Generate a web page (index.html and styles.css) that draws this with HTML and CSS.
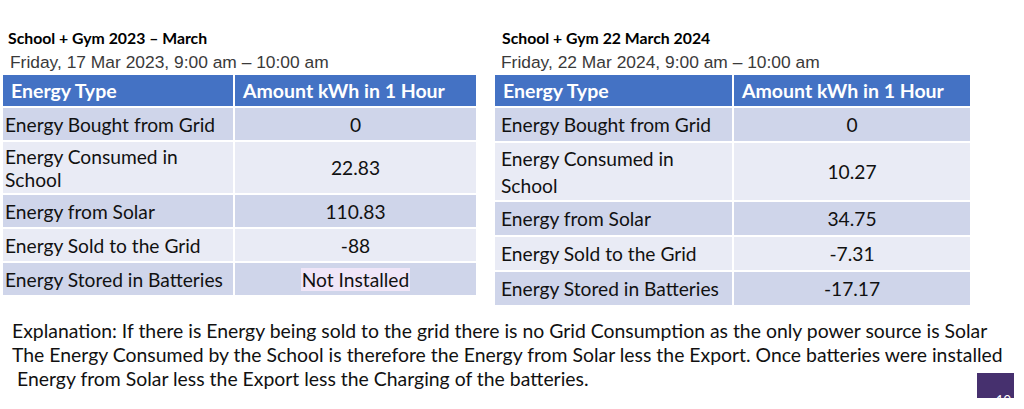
FILE: index.html
```html
<!DOCTYPE html>
<html lang="en">
<head>
<meta charset="utf-8">
<title>School + Gym energy comparison</title>
<link rel="stylesheet" href="styles.css">
</head>
<body>
<div class="page">
  <div class="tables">
    <section class="block block-left">
      <h2 class="title">School + Gym 2023 – March</h2>
      <p class="date">Friday, 17 Mar 2023, 9:00 am – 10:00 am</p>
      <table class="energy energy-left">
        <colgroup><col class="c1"><col class="c2"></colgroup>
        <thead>
          <tr class="head"><th>Energy Type</th><th>Amount kWh in 1 Hour</th></tr>
        </thead>
        <tbody>
          <tr class="dark"><td>Energy Bought from Grid</td><td class="num">0</td></tr>
          <tr class="light tall"><td>Energy Consumed in<br>School</td><td class="num">22.83</td></tr>
          <tr class="dark"><td>Energy from Solar</td><td class="num">110.83</td></tr>
          <tr class="light"><td>Energy Sold to the Grid</td><td class="num">-88</td></tr>
          <tr class="dark"><td>Energy Stored in Batteries</td><td class="num"><span class="mark">Not Installed</span></td></tr>
        </tbody>
      </table>
    </section>
    <section class="block block-right">
      <h2 class="title">School + Gym 22 March 2024</h2>
      <p class="date">Friday, 22 Mar 2024, 9:00 am – 10:00 am</p>
      <table class="energy energy-right">
        <colgroup><col class="c1"><col class="c2"></colgroup>
        <thead>
          <tr class="head"><th>Energy Type</th><th>Amount kWh in 1 Hour</th></tr>
        </thead>
        <tbody>
          <tr class="dark"><td>Energy Bought from Grid</td><td class="num">0</td></tr>
          <tr class="light tall"><td>Energy Consumed in<br>School</td><td class="num">10.27</td></tr>
          <tr class="dark"><td>Energy from Solar</td><td class="num">34.75</td></tr>
          <tr class="light"><td>Energy Sold to the Grid</td><td class="num">-7.31</td></tr>
          <tr class="dark"><td>Energy Stored in Batteries</td><td class="num">-17.17</td></tr>
        </tbody>
      </table>
    </section>
  </div>
  <div class="explain">
    <p>Explanation: If there is Energy being sold to the grid there is no Grid Consumption as the only power source is Solar</p>
    <p>The Energy Consumed by the School is therefore the Energy from Solar less the Export. Once batteries were installed</p>
    <p class="indent">Energy from Solar less the Export less the Charging of the batteries.</p>
  </div>
  <div class="slide-no"><span>10</span></div>
</div>
</body>
</html>
```

FILE: styles.css
```css
html, body {
  margin: 0;
  padding: 0;
  background: #ffffff;
}

.page {
  position: relative;
  width: 1024px;
  height: 409px;
  overflow: hidden;
  font-family: Lato, "Open Sans", sans-serif;
  color: #111111;
}

.tables {
  display: flex;
  gap: 15px;
  padding-top: 28px;
}

.block-left {
  margin-left: 1px;
}

.title {
  margin: 0;
  font-family: Lato, sans-serif;
  font-weight: 700;
  font-size: 15.8px;
  line-height: 19px;
  color: #000000;
}

.block-left .title { padding-left: 7px; }
.block-right .title { padding-left: 9px; }

.date {
  margin: 5px 0 0;
  font-family: "Liberation Sans", Arial, sans-serif;
  font-size: 17.4px;
  line-height: 20px;
  color: #3a3a3a;
}

.block-left .date { padding-left: 9px; }
.block-right .date { padding-left: 8px; }

.energy {
  margin-top: 1px;
  border-collapse: separate;
  border-spacing: 2px;
  table-layout: fixed;
  font-family: Lato, sans-serif;
  font-size: 19.2px;
}

.energy-left { width: 477px; }
.energy-left .c1 { width: 230px; }
.energy-left .c2 { width: 241px; }

.energy-right { width: 479px; }
.energy-right .c1 { width: 237px; }
.energy-right .c2 { width: 236px; }

.energy th,
.energy td {
  padding: 0;
  vertical-align: middle;
  text-align: left;
}

.energy .head th {
  background: #4472c4;
  color: #ffffff;
  font-weight: 700;
  font-size: 19.5px;
  padding-left: 8px;
  line-height: 22px;
}

.energy .head { height: 31px; }

.energy tbody tr { height: 32px; }

.energy .dark td { background: #cfd5ea; }
.energy .light td { background: #e9ebf5; }

.energy td {
  color: #111111;
  line-height: 23px;
}

.energy-left td { padding-left: 2px; }
.energy-right td { padding-left: 6px; }

.energy-left .tall { height: 51px; }
.energy-right tbody tr { height: 33px; }
.energy-right .tall { height: 57px; }
.energy-right td { line-height: 27px; }

.energy td.num {
  text-align: center;
  padding-left: 0;
}

.mark {
  display: inline-block;
  background: #f0e6f8;
  padding: 0 1px;
  line-height: 23px;
}

.explain {
  margin-top: 12px;
  padding-left: 12px;
  font-family: Lato, sans-serif;
  font-size: 19.4px;
  line-height: 24px;
  color: #111111;
}

.explain p {
  margin: 0;
  white-space: nowrap;
}

.explain .indent {
  padding-left: 5px;
}

.slide-no {
  position: absolute;
  left: 977px;
  top: 373px;
  width: 37px;
  height: 25px;
  overflow: hidden;
  background: #46306e;
}

.slide-no span {
  position: absolute;
  left: 19px;
  top: 21px;
  font-family: Lato, sans-serif;
  font-size: 13px;
  line-height: 13px;
  color: #ffffff;
}
```
